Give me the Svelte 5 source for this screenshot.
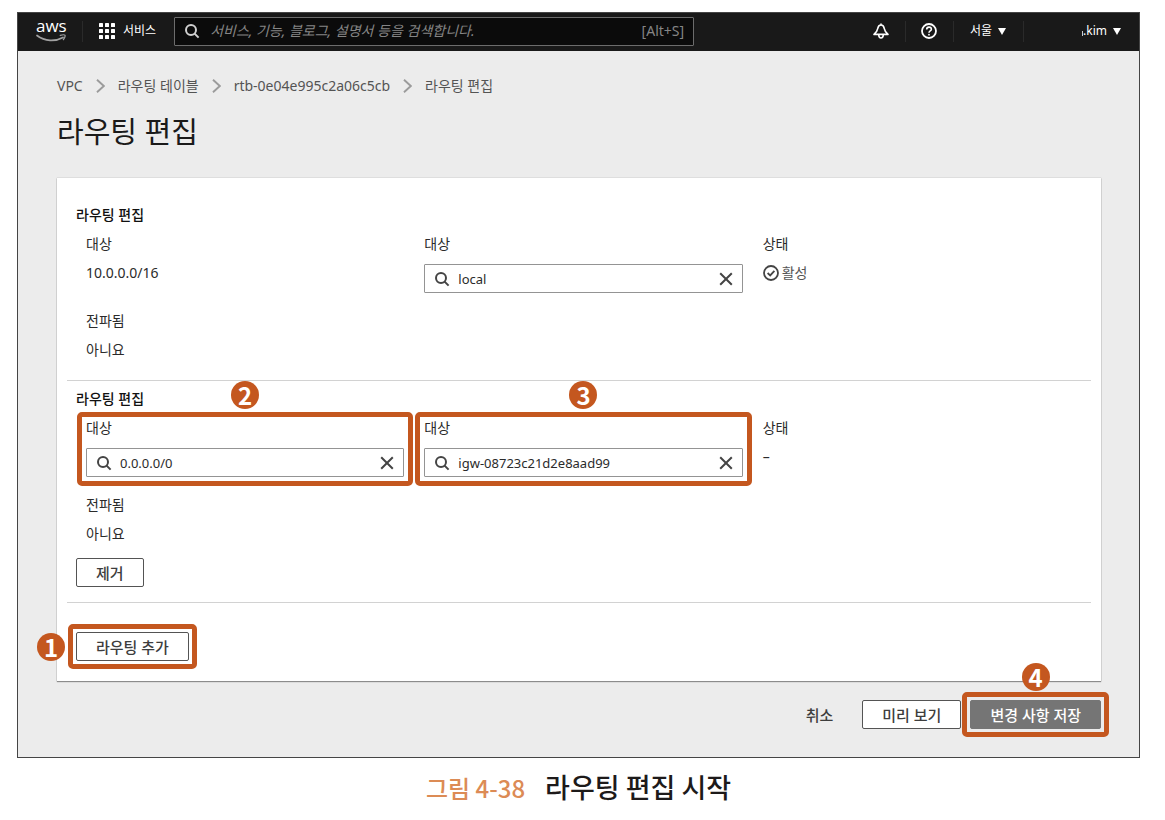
<script>
  const crumbs = ['VPC', '라우팅 테이블', 'rtb-0e04e995c2a06c5cb', '라우팅 편집'];

  let routes = $state([
    { id: 'r1', destination: '10.0.0.0/16', target: 'local', active: true, fixed: true },
    { id: 'r2', destination: '0.0.0.0/0', target: 'igw-08723c21d2e8aad99', active: false, fixed: false }
  ]);
</script>

{#snippet magnifier()}
  <svg class="magnifier" viewBox="0 0 16 16" width="16" height="16" aria-hidden="true">
    <circle cx="7" cy="7" r="5" />
    <path d="M10.6 10.6 14.6 14.6" />
  </svg>
{/snippet}

{#snippet searchField(route, key, label)}
  <label class="label" for="{route.id}-{key}">{label}</label>
  <div class="field">
    {@render magnifier()}
    <input id="{route.id}-{key}" type="text" bind:value={route[key]} />
    <button type="button" class="clear" aria-label="지우기" onclick={() => (route[key] = '')}>
      <svg viewBox="0 0 14 14" width="14" height="14" aria-hidden="true"><path d="M1.2 1.2 12.8 12.8M12.8 1.2 1.2 12.8" /></svg>
    </button>
  </div>
{/snippet}

<figure>
  <div class="console">
    <header>
      <a class="logo" href="#home" aria-label="aws">
        <span>aws</span>
        <svg viewBox="0 0 30 8" width="30" height="8" aria-hidden="true">
          <path d="M1 1.5C9 7.6 19 7.8 27 3.4" fill="none" stroke="#a2a2a2" stroke-width="1.7" stroke-linecap="round" />
          <path d="M24.2 1.3C26.4.7 28.4.6 28.9 1.2 29.3 1.8 28.6 4.1 27.4 5.7" fill="none" stroke="#a2a2a2" stroke-width="1.2" stroke-linecap="round" />
        </svg>
      </a>
      <button type="button" class="services">
        <svg viewBox="0 0 16 16" width="16" height="16" fill="#fff" aria-hidden="true">
          {#each [0, 6, 12] as y}
            {#each [0, 6, 12] as x}
              <rect {x} {y} width="4" height="4" rx="0.6" />
            {/each}
          {/each}
        </svg>
        서비스
      </button>
      <div class="search">
        {@render magnifier()}
        <input type="search" aria-label="검색" placeholder="서비스, 기능, 블로그, 설명서 등을 검색합니다." />
        <span>[Alt+S]</span>
      </div>
      <nav class="tools">
        <button type="button" class="tool" aria-label="알림">
          <svg viewBox="0 0 16 16" width="16" height="16" fill="none" stroke="#fff" stroke-width="1.6" stroke-linejoin="round" aria-hidden="true">
            <path d="M8 .4V2M8 2C6 2 5 3.8 4.7 5.6 4.3 8 3.2 9.6 1 11.4H15C12.8 9.6 11.7 8 11.3 5.6 11 3.8 10 2 8 2Z" />
            <path d="M5.7 11.8C5.8 13.9 6.7 15 8 15S10.2 13.9 10.3 11.8" />
          </svg>
        </button>
        <button type="button" class="tool" aria-label="도움말">
          <svg viewBox="0 0 16 16" width="16" height="16" fill="none" stroke="#fff" aria-hidden="true">
            <circle cx="8" cy="8" r="7" stroke-width="1.8" />
            <path d="M5.7 6.5C5.7 4.8 6.7 4.1 8 4.1S10.4 4.9 10.4 6.2C10.4 7.9 8 7.9 8 9.7" stroke-width="1.6" />
            <circle cx="8" cy="11.7" r="0.9" fill="#fff" stroke="none" />
          </svg>
        </button>
        <button type="button" class="menu region">
          서울
          <svg viewBox="0 0 8 7" width="8" height="7" aria-hidden="true"><path d="M0 0H8L4 7Z" fill="#fff" /></svg>
        </button>
        <button type="button" class="menu account">
          <span class="user">.kim</span>
          <svg viewBox="0 0 8 7" width="8" height="7" aria-hidden="true"><path d="M0 0H8L4 7Z" fill="#fff" /></svg>
        </button>
      </nav>
    </header>

    <main>
      <nav class="crumbs" aria-label="탐색 경로">
        {#each crumbs as crumb, i}
          {#if i}
            <svg viewBox="0 0 9 14" width="9" height="14" aria-hidden="true"><path d="M1 .8 7.8 7 1 13.2" fill="none" stroke="#9b9b9b" stroke-width="1.9" /></svg>
          {/if}
          <a href="#crumb-{i}">{crumb}</a>
        {/each}
      </nav>
      <h1>라우팅 편집</h1>

      <div class="card">
        {#each routes as route}
          <section>
            <h2>라우팅 편집</h2>
            <div class="grid">
              <div class="cell" class:marked={!route.fixed}>
                {#if route.fixed}
                  <div class="label">대상</div>
                  <div class="value">{route.destination}</div>
                {:else}
                  {@render searchField(route, 'destination', '대상')}
                  <b class="badge above">2</b>
                {/if}
              </div>
              <div class="cell" class:marked={!route.fixed}>
                {@render searchField(route, 'target', '대상')}
                {#if !route.fixed}<b class="badge above">3</b>{/if}
              </div>
              <div class="cell">
                <div class="label">상태</div>
                {#if route.active}
                  <div class="value status">
                    <svg viewBox="0 0 16 16" width="16" height="16" fill="none" stroke="#444" stroke-width="1.8" aria-hidden="true">
                      <circle cx="8" cy="8" r="7" />
                      <path d="M4.6 8 7.2 10.4 11.4 5.8" />
                    </svg>
                    활성
                  </div>
                {:else}
                  <div class="value">–</div>
                {/if}
              </div>
              <div class="cell">
                <div class="label">전파됨</div>
                <div class="value">아니요</div>
              </div>
            </div>
            {#if !route.fixed}
              <button type="button" class="btn remove">제거</button>
            {/if}
          </section>
        {/each}
        <div class="add">
          <span class="marked snug">
            <button type="button" class="btn">라우팅 추가</button>
            <b class="badge before">1</b>
          </span>
        </div>
      </div>

      <div class="actions">
        <button type="button" class="btn link">취소</button>
        <button type="button" class="btn">미리 보기</button>
        <span class="marked snug">
          <button type="button" class="btn primary">변경 사항 저장</button>
          <b class="badge above">4</b>
        </span>
      </div>
    </main>
  </div>
  <figcaption><span>그림 4-38</span>라우팅 편집 시작</figcaption>
</figure>

<style>
  :global(body) {
    background: #fff;
  }

  figure {
    margin: 12px 25px 0 17px;
    font: 14px/20px 'Noto Sans', 'Noto Sans CJK KR', sans-serif;
    color: #2b2b2b;
  }

  svg {
    display: block;
    flex: none;
  }

  button,
  input {
    font: inherit;
    color: inherit;
    background: none;
    border: 0;
    padding: 0;
    margin: 0;
  }

  input {
    flex: 1;
    min-width: 0;
    outline: none;
  }

  a {
    color: inherit;
    text-decoration: none;
  }

  .console {
    background: #ececec;
    border: 1px solid #454545;
    box-sizing: border-box;
  }

  header {
    display: flex;
    align-items: center;
    box-sizing: border-box;
    height: 38px;
    padding: 0 18px 2px;
    background: #191919;
    color: #fff;
    font-size: 12px;
  }

  .logo {
    width: 30px;
    padding-right: 16px;
    border-right: 1px solid #2a2a2a;
  }

  .logo span {
    display: block;
    font: 500 17px/16px 'Open Sans', sans-serif;
    text-align: center;
    margin-top: -3px;
  }

  .services {
    display: flex;
    align-items: center;
    gap: 8px;
    padding: 0 18px 0 16px;
    white-space: nowrap;
  }

  .search {
    flex: 0 1 520px;
    box-sizing: border-box;
    display: flex;
    align-items: center;
    gap: 10px;
    height: 29px;
    padding: 0 9px;
    background: #0b0b0b;
    border: 1px solid #6c6c6c;
    border-radius: 1px;
    color: #858585;
    font-size: 14px;
  }

  .search input::placeholder {
    color: #858585;
    font-style: italic;
    opacity: 1;
  }

  .magnifier {
    fill: none;
    stroke: #444;
    stroke-width: 2;
  }

  .search .magnifier {
    stroke: #d0d0d0;
  }

  .tools {
    display: flex;
    align-items: center;
    margin-left: auto;
  }

  .tool,
  .menu {
    display: flex;
    align-items: center;
    height: 21px;
  }

  .tool {
    padding: 0 16px 0 15px;
    border-right: 1px solid #2a2a2a;
  }

  .menu {
    gap: 6px;
  }

  .region {
    padding: 0 17px 0 16px;
    border-right: 1px solid #2a2a2a;
  }

  .account {
    padding-left: 58px;
  }

  .user {
    display: flex;
    align-items: center;
  }

  .user::before {
    content: '';
    width: 1px;
    height: 5px;
    margin-top: 4px;
    background: #ccc;
  }

  main {
    padding: 25px 38px 28px 39px;
  }

  .crumbs {
    display: flex;
    align-items: center;
    gap: 13px;
    color: #545454;
  }

  h1 {
    margin: 16px 0 26px;
    font-size: 29px;
    line-height: 40px;
    font-weight: 400;
    color: #1a1a1a;
  }

  .card {
    background: #fff;
    padding: 27px 10px 20px;
    box-shadow: 0 1px 1px #8c8c8c, 0 0 1px #999;
  }

  section {
    padding: 0 0 20px 9px;
    border-bottom: 1px solid #d2d2d2;
  }

  section + section {
    padding-top: 8px;
    padding-bottom: 15px;
  }

  h2 {
    margin: 0 0 9px;
    font-size: 14px;
    line-height: 20px;
    font-weight: 500;
    color: #111;
  }

  .grid {
    display: grid;
    grid-template-columns: repeat(3, minmax(0, 1fr));
    row-gap: 18px;
  }

  .cell {
    padding: 0 10px;
  }

  .label {
    display: block;
    margin-bottom: 9px;
  }

  .field {
    display: flex;
    align-items: center;
    gap: 8px;
    box-sizing: border-box;
    height: 29px;
    margin-top: 10px;
    padding: 0 9px;
    border: 1px solid #949494;
    border-radius: 1px;
    font-size: 13px;
  }

  .clear svg {
    stroke: #444;
    stroke-width: 2;
  }

  .status {
    display: flex;
    align-items: center;
    gap: 3px;
    color: #555;
  }

  .btn {
    height: 29px;
    box-sizing: border-box;
    padding: 0 19px;
    border: 1px solid #545454;
    border-radius: 2px;
    background: #fff;
    color: #3d3d3d;
    font-size: 15px;
    font-weight: 500;
    line-height: 20px;
    white-space: nowrap;
  }

  .remove {
    display: block;
    margin-top: 14px;
  }

  .link {
    border-color: transparent;
    background: none;
  }

  .primary {
    border-color: #757575;
    background: #757575;
    color: #fff;
  }

  .add {
    display: flex;
    padding: 29px 9px 0;
  }

  .actions {
    display: flex;
    justify-content: flex-end;
    gap: 9px;
    margin-top: 19px;
  }

  .marked {
    position: relative;
  }

  .marked::after {
    content: '';
    position: absolute;
    inset: -6px 1px -9px;
    border: 5px solid #c4571f;
    border-radius: 5px;
    pointer-events: none;
  }

  .snug {
    display: flex;
  }

  .snug::after {
    inset: -8px;
  }

  .badge {
    position: absolute;
    width: 28px;
    border-radius: 50%;
    background: #c4571f;
    color: #fff;
    font-family: 'Noto Sans CJK KR', sans-serif;
    font-size: 24px;
    line-height: 28px;
    text-align: center;
  }

  .above {
    left: calc(50% - 14px);
    top: -37px;
  }

  .before {
    top: 1px;
    right: calc(100% + 11px);
  }

  figcaption {
    margin-top: 9px;
    font: 500 27px/40px 'Noto Sans CJK KR', sans-serif;
    text-align: center;
    color: #1d1a1a;
  }

  figcaption span {
    margin-right: 20px;
    font-size: 24px;
    color: #dc8b55;
  }
</style>
